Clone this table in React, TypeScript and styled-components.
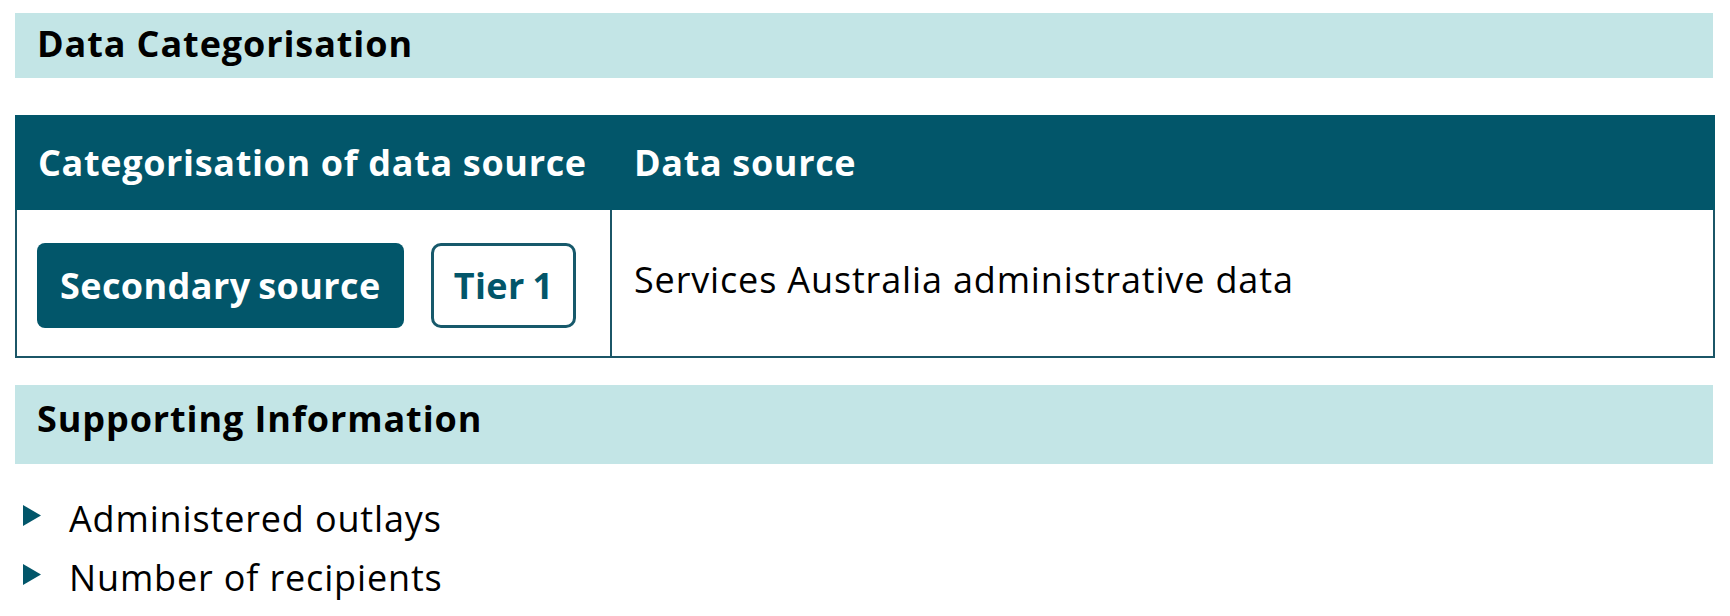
import styled, { createGlobalStyle } from "styled-components";

const teal = "#02566a";
const border = "#1b5667";

const GlobalStyle = createGlobalStyle`
  html, body {
    margin: 0;
    padding: 0;
    background: #ffffff;
    font-family: "Open Sans", "Liberation Sans", sans-serif;
  }
`;

const Page = styled.div`
  padding: 13px 15px 0 15px;
  color: #000000;
`;

const SectionBand = styled.h2<{ $padTop: number; $padBottom: number; $gap: number }>`
  margin: 0 2px ${p => p.$gap}px 0;
  padding: ${p => p.$padTop}px 22px ${p => p.$padBottom}px;
  background: #c3e5e6;
  font-size: 36px;
  font-weight: 700;
  line-height: 49px;
  letter-spacing: 0.9px;
  color: #000000;
`;

const Table = styled.div`
  display: grid;
  grid-template-columns: 595px 1fr;
  margin-bottom: 27px;
`;

const HeadCell = styled.div<{ $first?: boolean }>`
  display: flex;
  align-items: center;
  height: 95px;
  padding-left: ${p => (p.$first ? 23 : 24)}px;
  background: ${teal};
  color: #ffffff;
  font-size: 36px;
  font-weight: 700;
  line-height: 49px;
  letter-spacing: 0.65px;
  white-space: nowrap;
`;

const BodyCell = styled.div<{ $first?: boolean }>`
  display: flex;
  align-items: center;
  gap: 27px;
  padding: ${p => (p.$first ? "33px 0 28px 20px" : "0 0 8px 22px")};
  border-bottom: 2px solid ${border};
  border-left: 2px solid ${border};
  border-right: ${p => (p.$first ? "none" : `2px solid ${border}`)};
  font-size: 36px;
  line-height: 49px;
  letter-spacing: 0.85px;
`;

const Badge = styled.span<{ $outline?: boolean }>`
  display: inline-flex;
  align-items: center;
  box-sizing: border-box;
  height: 85px;
  padding: 0 ${p => (p.$outline ? 20 : 23)}px;
  border-radius: ${p => (p.$outline ? 10 : 8)}px;
  border: ${p => (p.$outline ? `3px solid #17596b` : "none")};
  background: ${p => (p.$outline ? "#ffffff" : teal)};
  color: ${p => (p.$outline ? teal : "#ffffff")};
  font-size: 36px;
  font-weight: 700;
  letter-spacing: 0.4px;
  word-spacing: -2px;
  white-space: nowrap;
`;

const List = styled.ul`
  list-style: none;
  margin: 25px 0 0;
  padding: 0 0 0 8px;
`;

const Item = styled.li`
  display: flex;
  align-items: center;
  gap: 28px;
  font-size: 36px;
  line-height: 59px;
  letter-spacing: 0.85px;
`;

const Marker = styled.svg`
  flex: 0 0 18px;
  width: 18px;
  height: 21px;
  margin-bottom: 6px;
`;

const items = ["Administered outlays", "Number of recipients"];

const App = () => {
  return (
    <Page>
      <GlobalStyle />
      <SectionBand $padTop={6} $padBottom={10} $gap={37}>
        Data Categorisation
      </SectionBand>
      <Table>
        <HeadCell $first>Categorisation of data source</HeadCell>
        <HeadCell>Data source</HeadCell>
        <BodyCell $first>
          <Badge>Secondary source</Badge>
          <Badge $outline>Tier 1</Badge>
        </BodyCell>
        <BodyCell>Services Australia administrative data</BodyCell>
      </Table>
      <SectionBand $padTop={9} $padBottom={21} $gap={0}>
        Supporting Information
      </SectionBand>
      <List>
        {items.map(item => (
          <Item key={item}>
            <Marker viewBox="0 0 18 21">
              <polygon points="0,0 18,10.5 0,21" fill={teal} />
            </Marker>
            <span>{item}</span>
          </Item>
        ))}
      </List>
    </Page>
  );
};

export default App;
